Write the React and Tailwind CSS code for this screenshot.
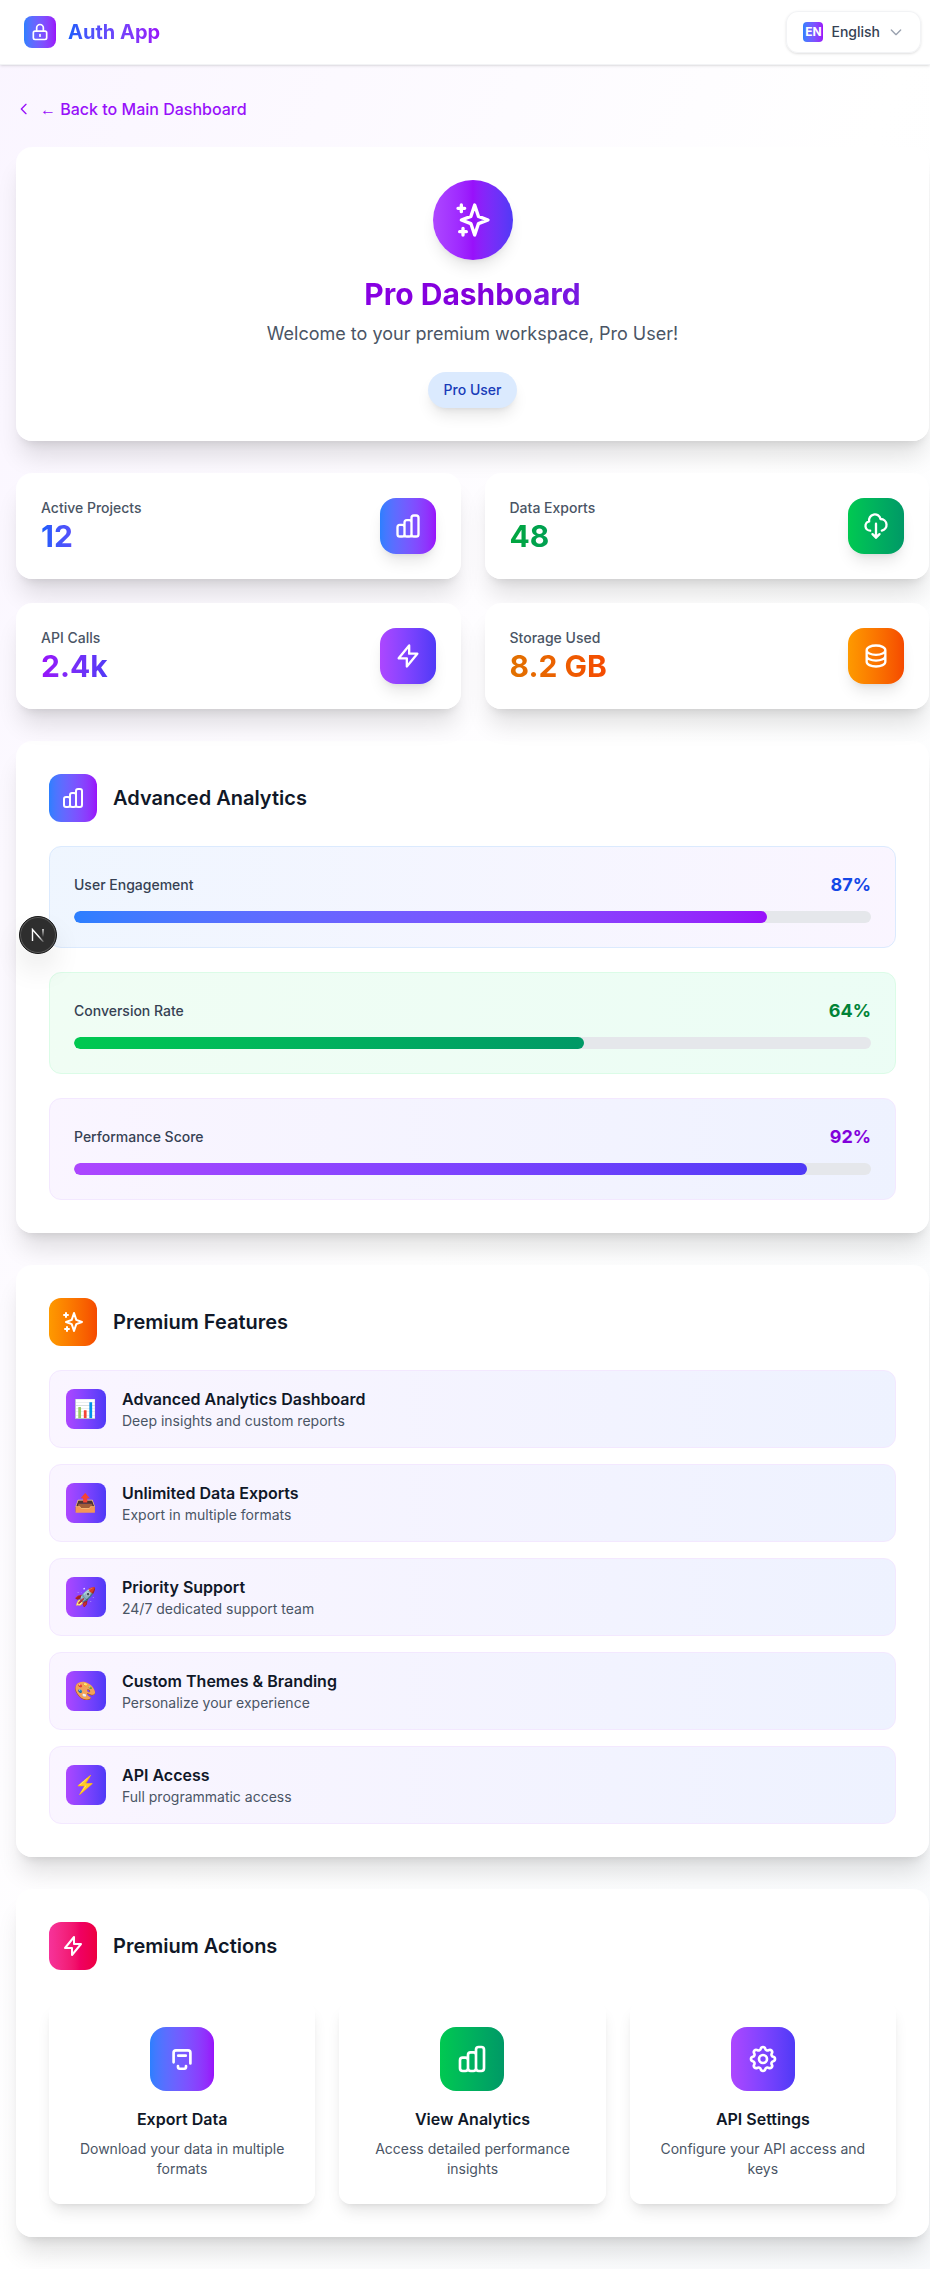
const ICONS = {
  lock: ["M12 15v2m-6 4h12a2 2 0 002-2v-6a2 2 0 00-2-2H6a2 2 0 00-2 2v6a2 2 0 002 2zm10-10V7a4 4 0 00-8 0v4h8z"],
  down: ["m19 9-7 7-7-7"],
  left: ["M15 19l-7-7 7-7"],
  sparkles: ["M5 3v4M3 5h4M6 17v4m-2-2h4m5-16l2.286 6.857L21 12l-5.714 2.143L13 21l-2.286-6.857L5 12l5.714-2.143L13 3z"],
  bars: ["M9 19v-6a2 2 0 00-2-2H5a2 2 0 00-2 2v6a2 2 0 002 2h2a2 2 0 002-2zm0 0V9a2 2 0 012-2h2a2 2 0 012 2v10m-6 0a2 2 0 002 2h2a2 2 0 002-2m0 0V5a2 2 0 012-2h2a2 2 0 012 2v14a2 2 0 01-2 2h-2a2 2 0 01-2-2z"],
  cloud: ["M7 16a4 4 0 01-.88-7.903A5 5 0 1115.9 6L16 6a5 5 0 011 9.9M9 19l3 3m0 0l3-3m-3 3V10"],
  bolt: ["M13 10V3L4 14h7v7l9-11h-7z"],
  database: ["M4 7v10c0 2.21 3.582 4 8 4s8-1.79 8-4V7M4 7c0 2.21 3.582 4 8 4s8-1.79 8-4M4 7c0-2.21 3.582-4 8-4s8 1.79 8 4m0 5c0 2.21-3.582 4-8 4s-8-1.79-8-4"],
  tray: ["M5.700 14.500V7.300a1.800 1.800 0 0 1 1.800-1.800h9a1.800 1.800 0 0 1 1.800 1.800v8", "M9.200 9.500h5.600", "M9 17.300v.7a1.300 1.300 0 0 0 1.300 1.300h3.400A1.300 1.300 0 0 0 15 18v-.7"],
  cog: ["M10.325 4.317c.426-1.756 2.924-1.756 3.35 0a1.724 1.724 0 002.573 1.066c1.543-.94 3.31.826 2.37 2.37a1.724 1.724 0 001.065 2.572c1.756.426 1.756 2.924 0 3.35a1.724 1.724 0 00-1.066 2.573c.94 1.543-.826 3.31-2.37 2.37a1.724 1.724 0 00-2.572 1.065c-.426 1.756-2.924 1.756-3.35 0a1.724 1.724 0 00-2.573-1.066c-1.543.94-3.31-.826-2.37-2.37a1.724 1.724 0 00-1.065-2.572c-1.756-.426-1.756-2.924 0-3.35a1.724 1.724 0 001.066-2.573c-.94-1.543.826-3.31 2.37-2.37.996.608 2.296.07 2.572-1.065z", "M15 12a3 3 0 11-6 0 3 3 0 016 0z"],
};

function Icon({ name, className }) {
  return (
    <svg viewBox="0 0 24 24" fill="none" stroke="currentColor" strokeWidth="2" strokeLinecap="round" strokeLinejoin="round" className={className}>
      {ICONS[name].map((d) => <path key={d} d={d} />)}
    </svg>
  );
}

const PANEL = "rounded-2xl border border-white/20 bg-white/95 shadow-[0_20px_25px_-5px_rgb(0_0_0/0.12),0_8px_10px_-6px_rgb(0_0_0/0.1)]";

function Heading({ icon, tone, children, className = "mb-6" }) {
  return (
    <div className={`flex items-center gap-4 ${className}`}>
      <div className={`flex size-12 items-center justify-center rounded-xl bg-linear-to-r text-white ${tone}`}>
        <Icon name={icon} className="size-6" />
      </div>
      <h2 className="text-xl font-semibold text-gray-900">{children}</h2>
    </div>
  );
}

const STATS = [
  { label: "Active Projects", value: "12", icon: "bars", text: "from-blue-600 to-purple-600", tone: "from-blue-500 to-purple-600" },
  { label: "Data Exports", value: "48", icon: "cloud", text: "from-green-600 to-emerald-600", tone: "from-green-500 to-emerald-600" },
  { label: "API Calls", value: "2.4k", icon: "bolt", text: "from-purple-600 to-indigo-600", tone: "from-purple-500 to-indigo-600" },
  { label: "Storage Used", value: "8.2 GB", icon: "database", text: "from-amber-600 to-orange-600", tone: "from-amber-500 to-orange-600" },
];

const METRICS = [
  { label: "User Engagement", value: 87, box: "from-blue-50 to-purple-50 border-blue-100", text: "text-blue-700", bar: "from-blue-500 to-purple-600" },
  { label: "Conversion Rate", value: 64, box: "from-green-50 to-emerald-50 border-green-100", text: "text-green-700", bar: "from-green-500 to-emerald-600" },
  { label: "Performance Score", value: 92, box: "from-purple-50 to-indigo-50 border-purple-100", text: "text-purple-700", bar: "from-purple-500 to-indigo-600" },
];

const FEATURES = [
  ["📊", "Advanced Analytics Dashboard", "Deep insights and custom reports"],
  ["📤", "Unlimited Data Exports", "Export in multiple formats"],
  ["🚀", "Priority Support", "24/7 dedicated support team"],
  ["🎨", "Custom Themes & Branding", "Personalize your experience"],
  ["⚡", "API Access", "Full programmatic access"],
];

const ACTIONS = [
  { title: "Export Data", text: "Download your data in multiple formats", icon: "tray", tone: "from-blue-500 to-purple-600" },
  { title: "View Analytics", text: "Access detailed performance insights", icon: "bars", tone: "from-green-500 to-emerald-600" },
  { title: "API Settings", text: "Configure your API access and keys", icon: "cog", tone: "from-purple-500 to-indigo-600" },
];

export default function App() {
  return (
    <div className="relative min-h-[2269px] w-full overflow-hidden bg-linear-to-br from-purple-50 via-white to-slate-50 font-['Inter','Noto_Color_Emoji',sans-serif] text-gray-900">
      <header className="relative flex h-[65px] items-center justify-between border-b border-gray-200/50 bg-white/95 pr-[9px] pl-6 shadow-sm">
        <div className="flex items-center gap-3">
          <div className="flex size-8 items-center justify-center rounded-lg bg-linear-to-r from-blue-500 to-purple-600 text-white">
            <Icon name="lock" className="size-5" />
          </div>
          <span className="bg-linear-to-r from-blue-600 to-purple-600 bg-clip-text text-xl font-bold text-transparent">Auth App</span>
        </div>
        <button className="flex h-[42px] items-center gap-2 rounded-xl border border-gray-200/50 bg-white/90 px-4 shadow-sm">
          <span className="flex size-5 items-center justify-center rounded-sm bg-linear-to-r from-blue-500 to-purple-600 text-xs font-bold text-white">EN</span>
          <span className="text-sm font-medium text-gray-700">English</span>
          <Icon name="down" className="size-4 text-gray-400" />
        </button>
      </header>

      <main className="ml-4 w-[913px] py-8">
        <a className="mb-[26px] flex h-6 items-center gap-2 font-medium text-purple-600">
          <Icon name="left" className="size-4" />
          <span><span className="font-['Liberation_Sans']">←</span> Back to Main Dashboard</span>
        </a>

        <section className={`mb-8 flex flex-col items-center p-8 text-center ${PANEL}`}>
          <div className="mb-4 flex size-20 items-center justify-center rounded-full bg-linear-to-r from-purple-500 via-purple-600 to-indigo-600 text-white shadow-lg">
            <Icon name="sparkles" className="size-10" />
          </div>
          <h1 className="mb-2 w-full bg-linear-to-r from-purple-600 via-purple-700 to-indigo-600 bg-clip-text text-3xl font-bold text-transparent">Pro Dashboard</h1>
          <p className="mb-6 text-lg text-gray-600">Welcome to your premium workspace, Pro User!</p>
          <span className="rounded-full bg-blue-100 px-4 py-2 text-sm font-medium text-blue-800 shadow-lg">Pro User</span>
        </section>

        <section className="mb-8 grid grid-cols-2 gap-6">
          {STATS.map((s) => (
            <div key={s.label} className={`flex items-center justify-between p-6 ${PANEL}`}>
              <div>
                <p className="text-sm font-medium text-gray-600">{s.label}</p>
                <p className={`bg-linear-to-r bg-clip-text text-3xl font-bold text-transparent ${s.text}`}>{s.value}</p>
              </div>
              <div className={`flex size-14 items-center justify-center rounded-2xl bg-linear-to-r text-white shadow-lg ${s.tone}`}>
                <Icon name={s.icon} className="size-7" />
              </div>
            </div>
          ))}
        </section>

        <section className={`mb-8 p-8 ${PANEL}`}>
          <Heading icon="bars" tone="from-blue-500 to-purple-600">Advanced Analytics</Heading>
          <div className="flex flex-col gap-6">
            {METRICS.map((m) => (
              <div key={m.label} className={`rounded-xl border bg-linear-to-r p-6 ${m.box}`}>
                <div className="mb-3 flex items-center justify-between">
                  <span className="text-sm font-medium text-gray-700">{m.label}</span>
                  <span className={`text-lg font-bold ${m.text}`}>{m.value}%</span>
                </div>
                <div className="h-3 overflow-hidden rounded-full bg-gray-200">
                  <div className={`h-3 rounded-full bg-linear-to-r ${m.bar}`} style={{ width: `${m.value}%` }} />
                </div>
              </div>
            ))}
          </div>
        </section>

        <section className={`mb-8 p-8 ${PANEL}`}>
          <Heading icon="sparkles" tone="from-amber-500 to-orange-600">Premium Features</Heading>
          <ul className="flex flex-col gap-4">
            {FEATURES.map(([emoji, title, text]) => (
              <li key={title} className="flex items-center gap-4 rounded-xl border border-purple-100 bg-linear-to-r from-purple-50 to-indigo-50 p-4">
                <div className="flex size-10 items-center justify-center rounded-lg bg-linear-to-r from-purple-500 to-indigo-600">
                  <span className="text-lg leading-none">{emoji}</span>
                </div>
                <div>
                  <p className="font-semibold text-gray-900">{title}</p>
                  <p className="text-sm text-gray-600">{text}</p>
                </div>
              </li>
            ))}
          </ul>
        </section>

        <section className={`p-8 ${PANEL}`}>
          <Heading icon="bolt" tone="from-pink-500 to-rose-600" className="mb-8">Premium Actions</Heading>
          <div className="grid grid-cols-3 gap-6">
            {ACTIONS.map((a) => (
              <div key={a.title} className="flex flex-col items-center rounded-xl border border-white/20 bg-white/90 p-6 text-center shadow-lg">
                <div className={`mb-4 flex size-16 items-center justify-center rounded-2xl bg-linear-to-r text-white ${a.tone}`}>
                  <Icon name={a.icon} className="size-8" />
                </div>
                <h3 className="mb-2 font-semibold text-gray-900">{a.title}</h3>
                <p className="text-sm text-gray-600">{a.text}</p>
              </div>
            ))}
          </div>
        </section>
      </main>

      <div className="absolute top-[916px] left-[19px] flex size-[38px] items-center justify-center rounded-full border border-[#171717] bg-[#2e2e2e] shadow-[inset_0_0_0_1px_#5a5a5a,0_16px_32px_-8px_rgba(0,0,0,0.24)]">
        <svg viewBox="0 0 14 14" className="size-[14px]" fill="none">
          <defs>
            <linearGradient id="nd" x1="5" y1="5" x2="13" y2="13" gradientUnits="userSpaceOnUse">
              <stop offset="0.4" stopColor="#fff" />
              <stop offset="1" stopColor="#fff" stopOpacity="0.2" />
            </linearGradient>
            <linearGradient id="ns" x1="12" y1="1" x2="12" y2="9" gradientUnits="userSpaceOnUse">
              <stop stopColor="#fff" />
              <stop offset="1" stopColor="#fff" stopOpacity="0" />
            </linearGradient>
          </defs>
          <path d="M1.500 13V1.500L12.500 14" stroke="url(#nd)" strokeWidth="1.400" />
          <path d="M12 1v8" stroke="url(#ns)" strokeWidth="1.400" />
        </svg>
      </div>
    </div>
  );
}
